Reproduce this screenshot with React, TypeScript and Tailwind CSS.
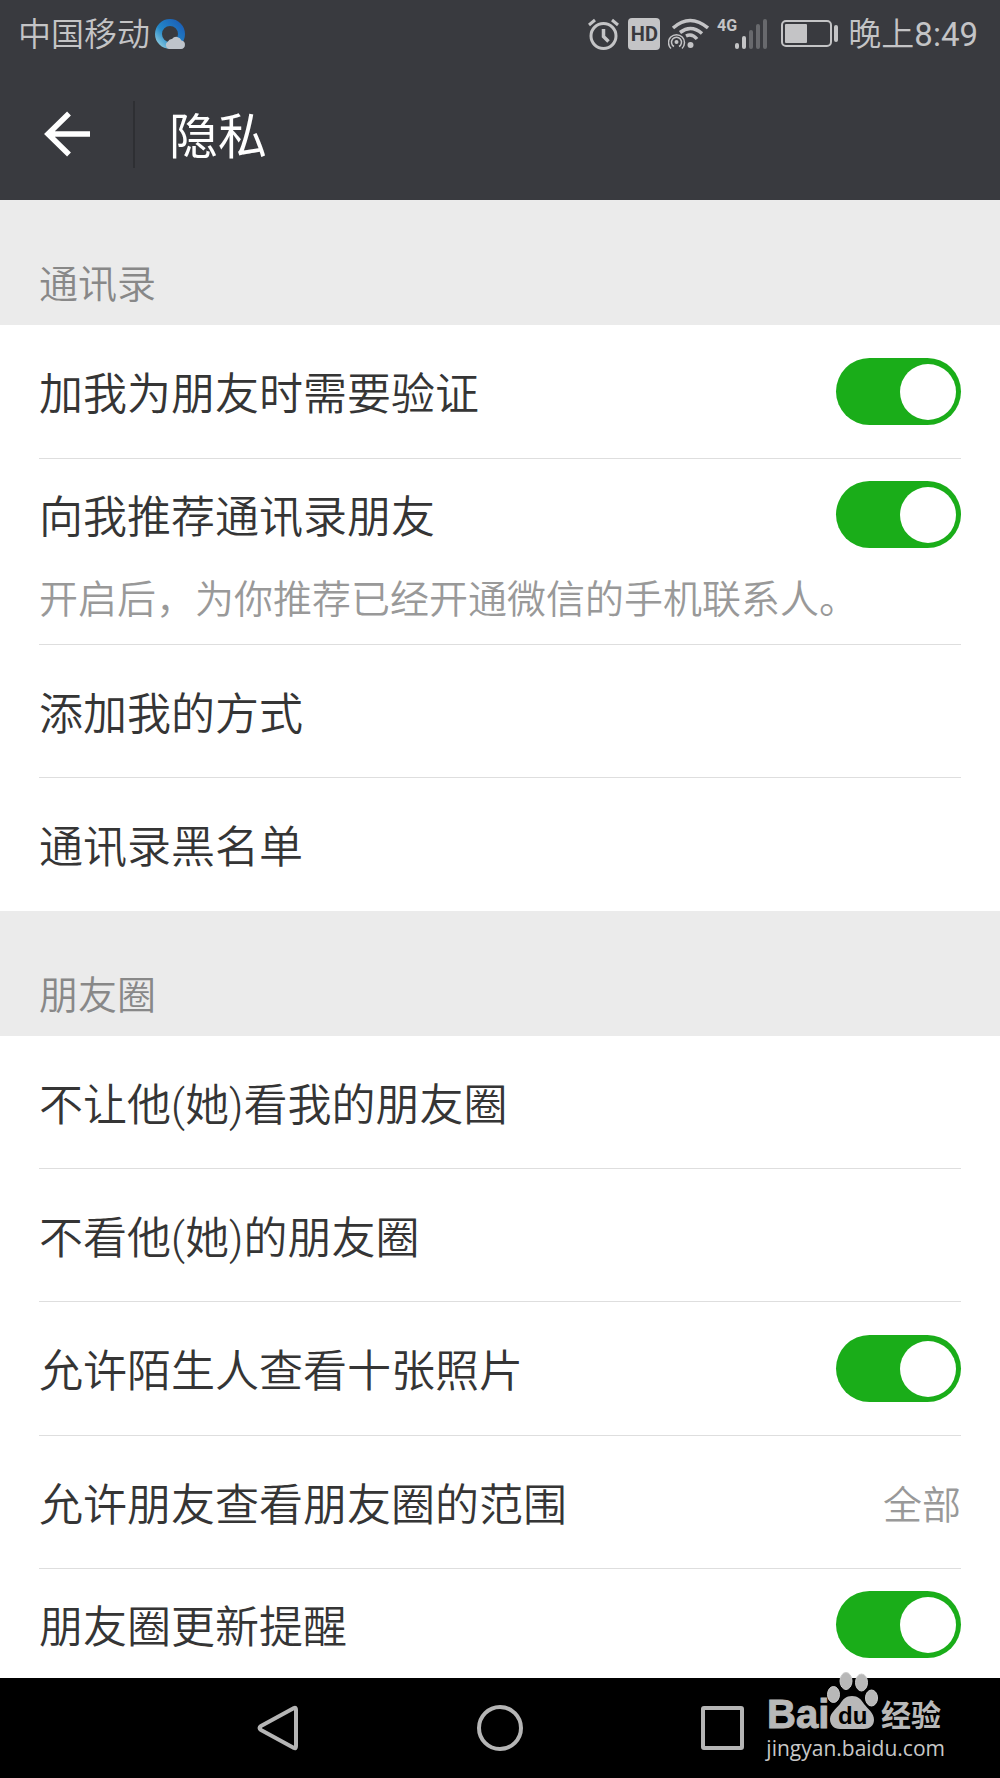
import { useState } from "react";
import clsx from "clsx";

type Setting = {
  id: string;
  label: string;
  kind: "switch" | "link";
  hint?: string;
  value?: string;
};

const contactSettings: Setting[] = [
  { id: "verify", label: "加我为朋友时需要验证", kind: "switch" },
  {
    id: "recommend",
    label: "向我推荐通讯录朋友",
    kind: "switch",
    hint: "开启后，为你推荐已经开通微信的手机联系人。",
  },
  { id: "add-ways", label: "添加我的方式", kind: "link" },
  { id: "blocklist", label: "通讯录黑名单", kind: "link" },
];

const momentSettings: Setting[] = [
  { id: "hide-mine", label: "不让他(她)看我的朋友圈", kind: "link" },
  { id: "hide-theirs", label: "不看他(她)的朋友圈", kind: "link" },
  { id: "strangers", label: "允许陌生人查看十张照片", kind: "switch" },
  { id: "range", label: "允许朋友查看朋友圈的范围", kind: "link", value: "全部" },
  { id: "updates", label: "朋友圈更新提醒", kind: "switch" },
];

export default function App() {
  return (
    <div className="flex min-h-screen flex-col bg-white font-['Roboto','Noto_Sans_CJK_SC',sans-serif] text-[#353535]">
      <header className="bg-[#393a3f]">
        <StatusBar />
        <TitleBar />
      </header>
      <main className="flex-1">
        <SettingsSection title="通讯录" settings={contactSettings} />
        <SettingsSection title="朋友圈" settings={momentSettings} />
      </main>
      <NavBar />
    </div>
  );
}

function StatusBar() {
  return (
    <div className="flex h-[68px] items-center justify-between pr-[22px] pl-[18px] text-[33px] leading-10 font-[350] text-[#c4c4c6]">
      <div className="flex items-center gap-1">
        <span className="pt-0.5">中国移动</span>
        <BrowserIcon />
      </div>
      <div className="flex items-center gap-2">
        <AlarmIcon />
        <span className="flex h-8 w-8 items-center justify-center rounded bg-[#c4c4c6] text-xl font-bold text-[#393a3f]">
          HD
        </span>
        <WifiIcon />
        <SignalIcon />
        <BatteryIcon />
        <time dateTime="20:49" className="pt-0.5">
          晚上<span className="font-normal">8:49</span>
        </time>
      </div>
    </div>
  );
}

function TitleBar() {
  return (
    <div className="flex h-[132px] items-center text-white">
      <button type="button" aria-label="返回" className="flex w-[133px] justify-center">
        <svg className="h-[46px] w-[46px]" viewBox="0 0 46 46" fill="none" stroke="currentColor" strokeWidth="5.500">
          <path d="M4 23H46M25 2.500L4 23L25 43.500" />
        </svg>
      </button>
      <span className="h-[67px] w-0.5 bg-[#2e2f33]" />
      <h1 className="ml-[34px] pt-2 text-[49px] leading-[56px]">隐私</h1>
    </div>
  );
}

function SettingsSection({ title, settings }: { title: string; settings: Setting[] }) {
  return (
    <section>
      <h2 className="flex h-[125px] items-end bg-[#ebebeb] px-[39px] pb-3.5 text-[39px] leading-[52px] font-[350] text-[#888888]">
        {title}
      </h2>
      <ul className="px-[39px]">
        {settings.map((setting) => (
          <li key={setting.id} className="border-b border-[#dedede] last:border-transparent">
            {setting.kind === "switch" ? <SwitchRow setting={setting} /> : <LinkRow setting={setting} />}
          </li>
        ))}
      </ul>
    </section>
  );
}

function SwitchRow({ setting }: { setting: Setting }) {
  const [checked, setChecked] = useState(true);
  // these two sit tighter to the divider above them
  const tight = setting.hint !== undefined || setting.id === "updates";

  return (
    <div className={clsx("font-[350]", tight ? "pt-[22px] pb-[18px]" : "py-[33px]")}>
      <div className="flex items-center justify-between">
        <label htmlFor={setting.id} className="pt-1.5 text-[44px] leading-[58px]">
          {setting.label}
        </label>
        <input
          id={setting.id}
          type="checkbox"
          role="switch"
          checked={checked}
          onChange={(event) => setChecked(event.target.checked)}
          className="flex h-[67px] w-[125px] shrink-0 appearance-none items-center rounded-full bg-[#d0d0d0] px-[5px] before:size-14 before:rounded-full before:bg-white checked:justify-end checked:bg-[#1aad19]"
        />
      </div>
      {setting.hint && <p className="mt-[26px] text-[39px] leading-[52px] text-[#999999]">{setting.hint}</p>}
    </div>
  );
}

function LinkRow({ setting }: { setting: Setting }) {
  return (
    <a href={`#${setting.id}`} className="flex h-[132px] items-center justify-between pt-2 font-[350]">
      <span className="text-[44px] leading-[58px]">{setting.label}</span>
      {setting.value && <span className="text-[39px] leading-[52px] text-[#999999]">{setting.value}</span>}
    </a>
  );
}

function NavBar() {
  return (
    <nav className="relative h-[100px] bg-black text-[#b5b5b5]">
      <div className="mx-auto grid h-full w-2/3 grid-cols-3 place-items-center">
        <NavButton label="后退">
          <path d="M40 4Q42 3 42 6V42Q42 45 40 44L7 26Q4 24 7 22Z" strokeLinejoin="round" />
        </NavButton>
        <NavButton label="主页">
          <circle cx="24" cy="24" r="21" />
        </NavButton>
        <NavButton label="最近任务">
          <rect x="5" y="4" width="39" height="40" rx="1" />
        </NavButton>
      </div>
      <Watermark />
    </nav>
  );
}

function NavButton({ label, children }: { label: string; children: React.ReactNode }) {
  return (
    <button type="button" aria-label={label}>
      <svg className="size-12" viewBox="0 0 48 48" fill="none" stroke="currentColor" strokeWidth="4">
        {children}
      </svg>
    </button>
  );
}

function Watermark() {
  return (
    <div className="absolute right-[55px] bottom-5 flex flex-col items-start text-[#c8c8c8]">
      <svg className="h-[67px] w-[177px] overflow-visible" viewBox="0 0 177 67" fill="#b8b8b8">
        <text x="1" y="57" className="font-['Liberation_Sans',sans-serif] text-[40px] font-bold" stroke="#b8b8b8" strokeWidth="1">
          Bai
        </text>
        <g stroke="#cccccc" strokeWidth="1">
          <ellipse cx="67.500" cy="23.500" rx="6" ry="8" />
          <ellipse cx="80" cy="10" rx="6" ry="8.500" />
          <ellipse cx="95.500" cy="11.500" rx="6" ry="8.500" />
          <ellipse cx="105.500" cy="27" rx="6" ry="8" />
        </g>
        <path d="M86 25C92 25 95 28 98 33C102 38 108 42 108 49C108 55 103 58 98 58H74C68 58 64 54 64 48C64 42 70 38 74 33C77 28 80 25 86 25Z" />
        <text x="72" y="53" fill="#000000" className="font-['Liberation_Sans',sans-serif] text-2xl font-bold">
          du
        </text>
        <text x="115" y="55" className="font-['Noto_Sans_CJK_SC',sans-serif] text-[30px] font-bold">
          经验
        </text>
      </svg>
      <span className="font-['Open_Sans',sans-serif] text-[21px] leading-5">jingyan.baidu.com</span>
    </div>
  );
}

function BrowserIcon() {
  return (
    <svg className="size-8" viewBox="0 0 32 32">
      <defs>
        <linearGradient id="ring" x1="0" y1="1" x2="1" y2="0">
          <stop offset="0" stopColor="#8ccbe0" />
          <stop offset="0.4" stopColor="#2387c8" />
          <stop offset="1" stopColor="#1b5fb8" />
        </linearGradient>
      </defs>
      <circle cx="16" cy="16" r="11.500" fill="none" stroke="url(#ring)" strokeWidth="7" />
      <path d="M15 31A4 4 0 0 1 14 23.500A4 4 0 0 1 18 21A5.500 5.500 0 0 1 27.500 22.500A4.300 4.300 0 0 1 27 31Z" fill="#bfc4cb" />
    </svg>
  );
}

function AlarmIcon() {
  return (
    <svg className="size-8" viewBox="0 0 32 32" fill="none" stroke="currentColor" strokeWidth="3">
      <circle cx="15.500" cy="18" r="12.500" />
      <path d="M15.500 11V18.500L20.500 23.500" strokeWidth="3.500" />
      <path d="M1 7L7 2M24 2L30 7" />
    </svg>
  );
}

function WifiIcon() {
  return (
    <svg className="h-8 w-[41px]" viewBox="0 0 41 32" fill="none" stroke="currentColor">
      <path d="M5 10Q22 -5 40 10M12 14.500Q23 6 34 15.500M18 18Q24 15 29 21" strokeWidth="3.500" />
      <circle cx="22.500" cy="27" r="3" fill="currentColor" stroke="none" />
      <circle cx="8.500" cy="24" r="2" fill="currentColor" stroke="none" />
      <path d="M6 28.500A5 5 0 1 1 11 28.500" strokeWidth="1.500" />
      <path d="M3 30.500A8 8 0 1 1 14 30.500" strokeWidth="1.500" />
    </svg>
  );
}

function SignalIcon() {
  return (
    <svg className="h-8 w-14 overflow-visible" viewBox="0 0 56 32" fill="currentColor">
      <text x="0" y="13" className="font-['Roboto',sans-serif] text-base font-bold">
        4G
      </text>
      <rect x="18" y="25" width="4" height="6" rx="2" />
      <rect x="25" y="18" width="4" height="13" rx="2" />
      <g fill="#68696d">
        <rect x="32" y="12" width="4" height="19" rx="2" />
        <rect x="39" y="6" width="4" height="25" rx="2" />
        <rect x="46" y="1" width="4" height="30" rx="2" />
      </g>
    </svg>
  );
}

function BatteryIcon() {
  return (
    <svg className="h-8 w-[59px]" viewBox="0 0 59 32" fill="currentColor">
      <rect x="1" y="3" width="49" height="25" rx="4" fill="none" stroke="currentColor" strokeWidth="2" />
      <rect x="4" y="6" width="22" height="19" rx="1" />
      <rect x="53" y="7" width="4" height="17" rx="2" />
    </svg>
  );
}
